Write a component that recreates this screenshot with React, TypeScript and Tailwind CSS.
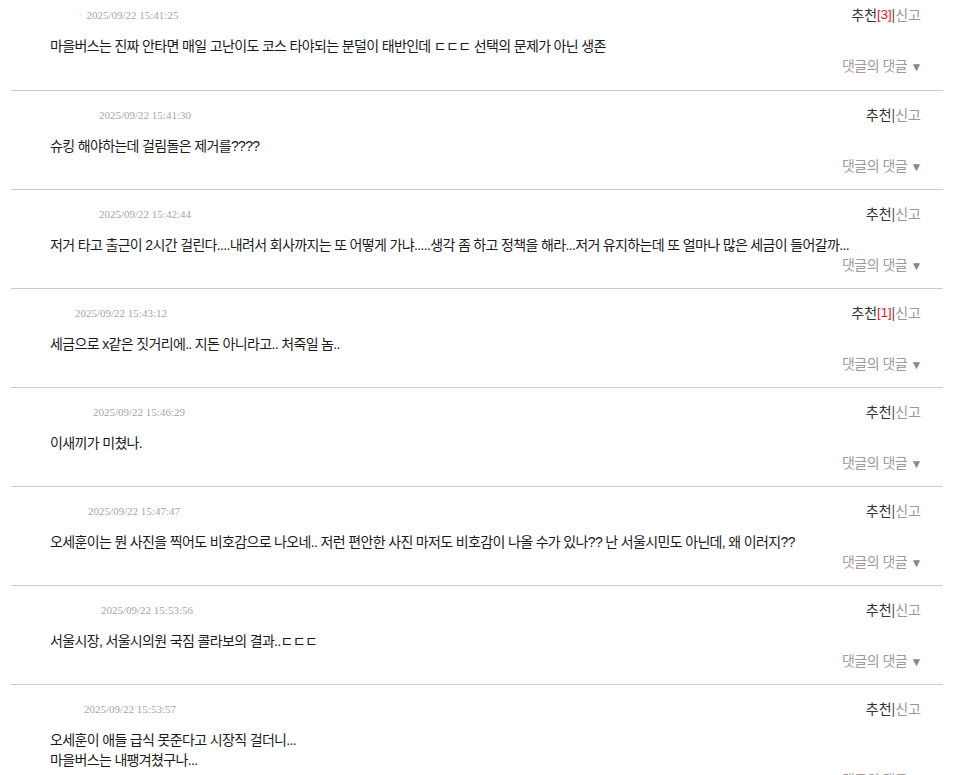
import React from "react";

type CommentItem = {
  date: string;
  indent: number;
  text: string[];
  likes?: number;
  mark?: boolean;
};

const comments: CommentItem[] = [
  {
    date: "2025/09/22 15:41:25",
    indent: 36,
    text: ["마을버스는 진짜 안타면 매일 고난이도 코스 타야되는 분덜이 태반인데 ㄷㄷㄷ 선택의 문제가 아닌 생존"],
    likes: 3,
    mark: true,
  },
  { date: "2025/09/22 15:41:30", indent: 49, text: ["슈킹 해야하는데 걸림돌은 제거를????"] },
  {
    date: "2025/09/22 15:42:44",
    indent: 49,
    text: ["저거 타고 출근이 2시간 걸린다....내려서 회사까지는 또 어떻게 가냐.....생각 좀 하고 정책을 해라...저거 유지하는데 또 얼마나 많은 세금이 들어갈까..."],
  },
  {
    date: "2025/09/22 15:43:12",
    indent: 25,
    text: ["세금으로 x같은 짓거리에.. 지돈 아니라고.. 처죽일 놈.."],
    likes: 1,
  },
  { date: "2025/09/22 15:46:29", indent: 43, text: ["이새끼가 미쳤나."] },
  {
    date: "2025/09/22 15:47:47",
    indent: 38,
    text: ["오세훈이는 뭔 사진을 찍어도 비호감으로 나오네.. 저런 편안한 사진 마저도 비호감이 나올 수가 있나?? 난 서울시민도 아닌데, 왜 이러지??"],
  },
  { date: "2025/09/22 15:53:56", indent: 51, text: ["서울시장, 서울시의원 국짐 콜라보의 결과..ㄷㄷㄷ"] },
  {
    date: "2025/09/22 15:53:57",
    indent: 34,
    text: ["오세훈이 애들 급식 못준다고 시장직 걸더니...", "마을버스는 내팽겨쳤구나..."],
  },
];

const sans = "font-['Liberation_Sans','Noto_Sans_CJK_KR',sans-serif]";

const Row: React.FC<{ item: CommentItem; first: boolean }> = ({ item, first }) => (
  <div
    className={`border-b border-[#cccccc] pl-[39px] pr-[22px] pt-[16px] ${
      first ? "-mt-[9px] pb-[13px]" : "pb-[12px]"
    }`}
  >
    <div className="flex items-center justify-between h-[16px]">
      <div className="flex items-center" style={{ paddingLeft: item.indent }}>
        {item.mark && <span className="text-[9px] text-[#c8c8c8] mr-[5px] -ml-[7px]">·</span>}
        <span className="font-['Liberation_Serif',serif] text-[11px] text-[#a6a6a6]">{item.date}</span>
      </div>
      <div className={`${sans} text-[14px] flex items-center`}>
        <span className="text-[#333333]">추천</span>
        {item.likes !== undefined && (
          <span className="text-[#ee1111] text-[13px]">[{item.likes}]</span>
        )}
        <span className="text-[#555555]">|</span>
        <span className="text-[#999999]">신고</span>
      </div>
    </div>
    <div className={`${sans} text-[14px] tracking-[-0.65px] leading-[20px] text-[#1a1a1a] mt-[13px]`}>
      {item.text.map((line, i) => (
        <div key={i}>{line}</div>
      ))}
    </div>
    <div className={`${sans} text-[14px] tracking-[-0.5px] leading-[20px] text-[#a09a9a] flex justify-end -mr-[1px]`}>
      <span>
        댓글의 댓글 <span className="text-[12px] text-[#888888]">▼</span>
      </span>
    </div>
  </div>
);

const App: React.FC = () => {
  return (
    <div className="w-[965px] h-[775px] overflow-hidden bg-white">
      <div className="ml-[11px] mr-[22px]">
        {comments.map((c, i) => (
          <Row key={i} item={c} first={i === 0} />
        ))}
      </div>
    </div>
  );
};

export default App;
